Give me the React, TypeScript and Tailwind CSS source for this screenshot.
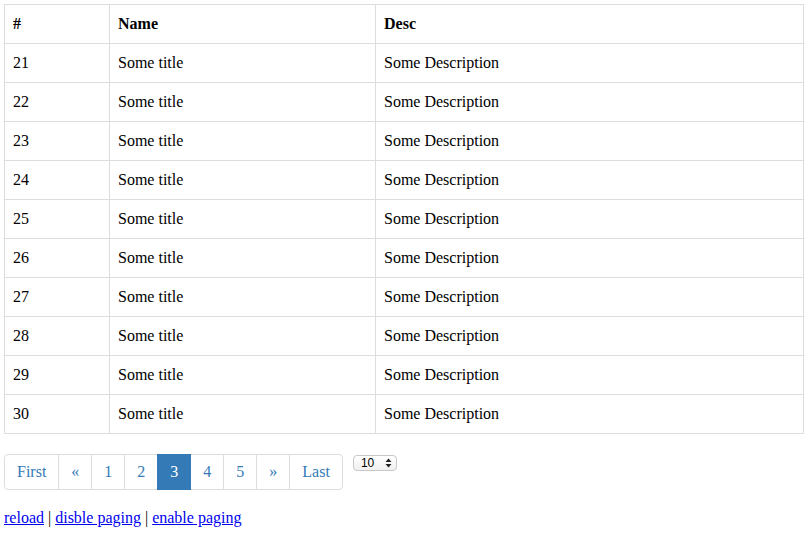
import React from "react";

const rows = Array.from({ length: 10 }, (_, i) => ({
  id: 21 + i,
  name: "Some title",
  desc: "Some Description",
}));

const pages = ["First", "«", "1", "2", "3", "4", "5", "»", "Last"];

export default function App() {
  return (
    <div className="p-[4px] text-[16px] leading-[22px] text-black" style={{ fontFamily: '"Liberation Serif", "Times New Roman", serif' }}>
      <table className="w-[800px] border-collapse border border-[#ddd]">
        <thead>
          <tr>
            <th className="h-[39px] w-[105px] border border-[#ddd] px-2 py-2 text-left font-bold">#</th>
            <th className="h-[39px] w-[266px] border border-[#ddd] px-2 py-2 text-left font-bold">Name</th>
            <th className="h-[39px] border border-[#ddd] px-2 py-2 text-left font-bold">Desc</th>
          </tr>
        </thead>
        <tbody>
          {rows.map((r) => (
            <tr key={r.id}>
              <td className="h-[39px] border border-[#ddd] px-2 py-2">{r.id}</td>
              <td className="h-[39px] border border-[#ddd] px-2 py-2">{r.name}</td>
              <td className="h-[39px] border border-[#ddd] px-2 py-2">{r.desc}</td>
            </tr>
          ))}
        </tbody>
      </table>

      <div className="mt-[20px] flex items-start">
        <ul className="flex">
          {pages.map((p, i) => {
            const active = p === "3";
            return (
              <li key={p}>
                <a
                  href="#"
                  className={
                    "block h-[36px] border px-[12px] py-[6px] leading-[22px] " +
                    (i > 0 ? "-ml-px " : "") +
                    (i === 0 ? "rounded-l-[4px] " : "") +
                    (i === pages.length - 1 ? "rounded-r-[4px] " : "") +
                    (active
                      ? "relative z-10 border-[#337ab7] bg-[#337ab7] text-white"
                      : "border-[#ddd] bg-white text-[#337ab7]")
                  }
                >
                  {p}
                </a>
              </li>
            );
          })}
        </ul>
        <div
          className="ml-[10px] mt-px flex h-[16px] w-[44px] items-center justify-between rounded-[4px] border border-[#c8c8c8] bg-gradient-to-b from-white to-[#f0f0f0] pl-[7px] pr-[4px] text-[12px] leading-none"
          style={{ fontFamily: '"Liberation Sans", Arial, sans-serif' }}
        >
          <span>10</span>
          <svg width="7" height="10" viewBox="0 0 7 10">
            <path d="M3.5 0.5 L6.5 4 H0.5 Z" fill="#222" />
            <path d="M3.5 9.5 L6.5 6 H0.5 Z" fill="#222" />
          </svg>
        </div>
      </div>

      <div className="mt-[17px]">
        <a href="#" className="text-[#0000ee] underline">reload</a> |{" "}
        <a href="#" className="text-[#0000ee] underline">disble paging</a> |{" "}
        <a href="#" className="text-[#0000ee] underline">enable paging</a>
      </div>
    </div>
  );
}
